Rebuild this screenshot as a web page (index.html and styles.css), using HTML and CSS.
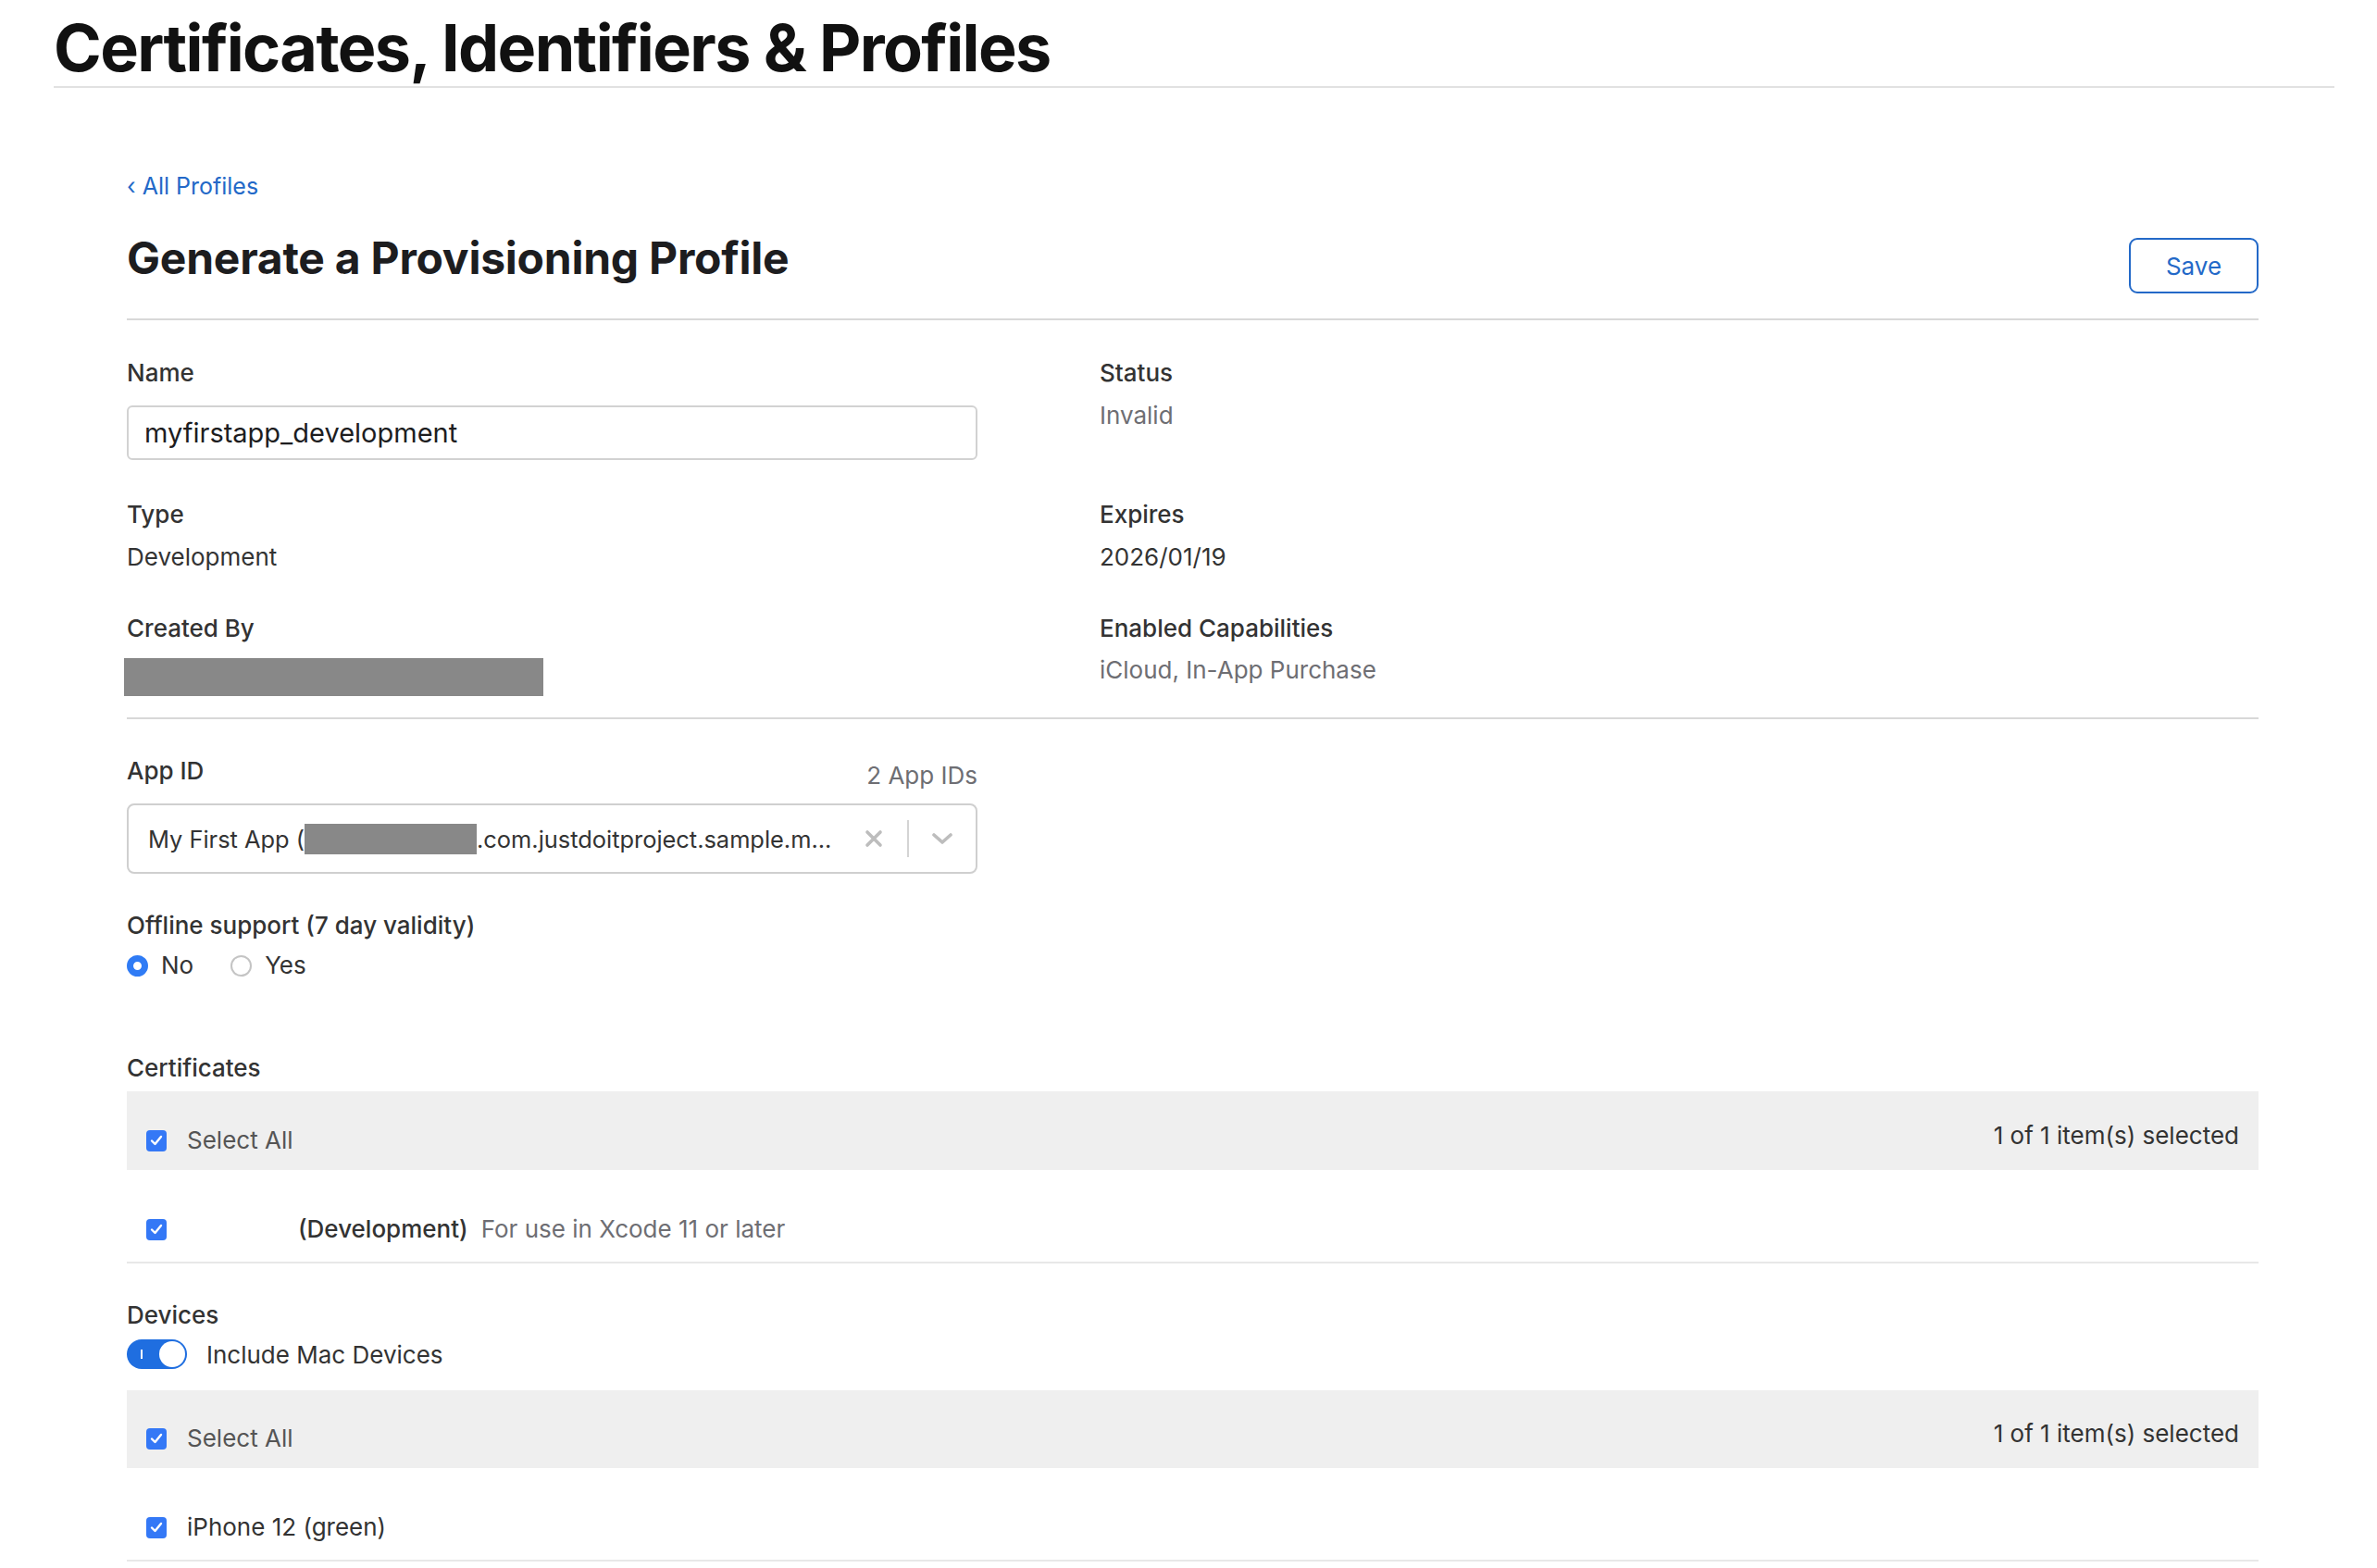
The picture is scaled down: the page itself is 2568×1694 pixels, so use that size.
FILE: index.html
```html
<!DOCTYPE html>
<html lang="en">
  <head>
    <meta charset="UTF-8" />
    <meta name="viewport" content="width=device-width, initial-scale=1.0" />
    <title>Certificates, Identifiers &amp; Profiles</title>
    <link rel="stylesheet" href="styles.css">
  </head>
  <body>
    <header class="page-header">
      <h1>Certificates, Identifiers &amp; Profiles</h1>
    </header>

    <main class="content">
      <a class="back-link" href="#">&lsaquo; All Profiles</a>

      <div class="title-row">
        <h2>Generate a Provisioning Profile</h2>
        <button class="save-btn">Save</button>
      </div>

      <!-- profile summary -->
      <div class="details">
        <div class="field">
          <div class="label">Name</div>
          <input class="text-input" type="text" value="myfirstapp_development">
        </div>
        <div class="field">
          <div class="label">Status</div>
          <div class="value muted">Invalid</div>
        </div>
        <div class="field">
          <div class="label">Type</div>
          <div class="value">Development</div>
        </div>
        <div class="field">
          <div class="label">Expires</div>
          <div class="value">2026/01/19</div>
        </div>
        <div class="field last-row">
          <div class="label">Created By</div>
          <div class="redacted created-by"></div>
        </div>
        <div class="field last-row">
          <div class="label">Enabled Capabilities</div>
          <div class="value muted caps">iCloud, In-App Purchase</div>
        </div>
      </div>

      <div class="app-id">
        <div class="app-id-head">
          <span class="label">App ID</span>
          <span class="app-count">2 App IDs</span>
        </div>
        <div class="select">
          <span class="select-text">My First App (<span class="redacted app-team"></span>.com.justdoitproject.sample.m...</span>
          <span class="select-tools">
            <svg class="clear-icon" width="20" height="20" viewBox="0 0 20 20">
              <path d="M3 3 L17 17 M17 3 L3 17" stroke="#bdbdbd" stroke-width="3.6" stroke-linecap="round" fill="none"/>
            </svg>
            <span class="tool-divider"></span>
            <svg class="chevron-icon" width="24" height="14" viewBox="0 0 24 14">
              <path d="M3 3 L12 11 L21 3" stroke="#bdbdbd" stroke-width="3.6" stroke-linecap="round" stroke-linejoin="round" fill="none"/>
            </svg>
          </span>
        </div>
      </div>

      <div class="section-label offline-label">Offline support (7 day validity)</div>
      <div class="radios">
        <label class="radio-item"><span class="radio checked"></span>No</label>
        <label class="radio-item"><span class="radio"></span>Yes</label>
      </div>

      <div class="section-label certs-label">Certificates</div>
      <div class="list-head">
        <div class="check-item select-all">
          <span class="check"><svg width="14" height="12" viewBox="0 0 14 12"><path d="M2 6.5 L5.5 10 L12 2" stroke="#fff" stroke-width="2.4" stroke-linecap="round" stroke-linejoin="round" fill="none"/></svg></span>
          Select All
        </div>
        <div class="selected-count">1 of 1 item(s) selected</div>
      </div>
      <div class="list-row">
        <span class="check"><svg width="14" height="12" viewBox="0 0 14 12"><path d="M2 6.5 L5.5 10 L12 2" stroke="#fff" stroke-width="2.4" stroke-linecap="round" stroke-linejoin="round" fill="none"/></svg></span>
        <span class="cert-name">(Development)</span>
        <span class="cert-note">For use in Xcode 11 or later</span>
      </div>

      <div class="section-label devices-label">Devices</div>
      <div class="toggle-row">
        <span class="toggle"><span class="toggle-mark"></span><span class="toggle-knob"></span></span>
        Include Mac Devices
      </div>
      <div class="list-head devices-head">
        <div class="check-item select-all">
          <span class="check"><svg width="14" height="12" viewBox="0 0 14 12"><path d="M2 6.5 L5.5 10 L12 2" stroke="#fff" stroke-width="2.4" stroke-linecap="round" stroke-linejoin="round" fill="none"/></svg></span>
          Select All
        </div>
        <div class="selected-count">1 of 1 item(s) selected</div>
      </div>
      <div class="list-row">
        <span class="check"><svg width="14" height="12" viewBox="0 0 14 12"><path d="M2 6.5 L5.5 10 L12 2" stroke="#fff" stroke-width="2.4" stroke-linecap="round" stroke-linejoin="round" fill="none"/></svg></span>
        <span class="device-name">iPhone 12 (green)</span>
      </div>
    </main>
  </body>
</html>
```

FILE: styles.css
```css
body {
  margin: 0;
  font-family: "Inter", "Liberation Sans", sans-serif;
  font-size: 26px;
  color: #333;
  background: #fff;
}

.page-header {
  margin: 0 46px 0 58px;
  border-bottom: 2px solid #e1e1e1;
}

h1 {
  margin: 0;
  padding-top: 11px;
  font-size: 70px;
  line-height: 82px;
  font-weight: 700;
  letter-spacing: -0.023em;
  color: #111;
}

.content {
  margin: 0 128px 0 137px;
}

.back-link {
  display: block;
  margin-top: 91px;
  font-size: 25px;
  line-height: 30px;
  color: #2369c8;
  text-decoration: none;
}

.title-row {
  display: flex;
  justify-content: space-between;
  align-items: flex-start;
  padding: 34px 0 27px;
  border-bottom: 2px solid #d8d8d8;
}

h2 {
  margin: 0;
  font-size: 48px;
  line-height: 58px;
  font-weight: 700;
  letter-spacing: -0.005em;
  color: #1d1d1f;
}

.save-btn {
  margin-top: 7px;
  width: 140px;
  height: 60px;
  border: 2px solid #2369c8;
  border-radius: 9px;
  background: #fff;
  color: #2369c8;
  font-family: inherit;
  font-size: 26px;
}

.details {
  display: grid;
  grid-template-columns: 1051px 1fr;
  row-gap: 44px;
  padding: 42px 0 23px;
  border-bottom: 2px solid #d8d8d8;
}

.last-row {
  margin-top: 3px;
}

.label,
.section-label {
  font-weight: 500;
  line-height: 30px;
  color: #333;
}

.value {
  margin-top: 16px;
  line-height: 30px;
}

.muted {
  color: #6e6e73;
}

.caps {
  margin-top: 15px;
}

.text-input {
  display: block;
  box-sizing: border-box;
  margin-top: 20px;
  width: 919px;
  height: 59px;
  padding: 0 17px;
  border: 2px solid #d2d2d2;
  border-radius: 6px;
  font-family: inherit;
  font-size: 29px;
  color: #1d1d1f;
}

.redacted {
  display: inline-block;
  background: #888;
}

.created-by {
  display: block;
  margin: 17px 0 0 -3px;
  width: 453px;
  height: 41px;
}

.app-id {
  width: 919px;
  margin-top: 41px;
}

.app-id-head {
  display: flex;
  justify-content: space-between;
  align-items: flex-start;
}

.app-count {
  line-height: 40px;
  color: #6e6e73;
}

.select {
  display: flex;
  align-items: center;
  box-sizing: border-box;
  margin-top: 10px;
  height: 76px;
  padding-left: 21px;
  border: 2px solid #cfcfcf;
  border-radius: 8px;
}

.select-text {
  display: flex;
  align-items: center;
  white-space: nowrap;
  font-size: 25.4px;
  color: #333;
}

.app-team {
  width: 186px;
  height: 33px;
}

.select-tools {
  display: flex;
  align-items: center;
  margin-left: auto;
  padding-right: 24px;
}

.clear-icon {
  margin-right: 26px;
}

.tool-divider {
  width: 2px;
  height: 40px;
  background: #d4d4d4;
  margin-right: 24px;
}

.offline-label {
  margin-top: 41px;
}

.radios {
  display: flex;
  gap: 40px;
  margin-top: 13px;
  line-height: 30px;
}

.radio-item {
  display: flex;
  align-items: center;
  gap: 14px;
  color: #333;
}

.radio {
  box-sizing: border-box;
  width: 23px;
  height: 23px;
  border-radius: 50%;
  border: 2px solid #c4c4c4;
  background: #fff;
}

.radio.checked {
  border: 7.5px solid #2f7bf5;
}

.certs-label {
  margin-top: 81px;
}

.list-head {
  display: flex;
  justify-content: space-between;
  align-items: flex-end;
  box-sizing: border-box;
  margin-top: 10px;
  height: 85px;
  padding: 0 21px 17px;
  background: #efefef;
  line-height: 30px;
}

.check-item {
  display: flex;
  align-items: center;
  gap: 22px;
}

.select-all {
  color: #555;
}

.selected-count {
  padding-bottom: 5px;
  color: #333;
}

.check {
  display: inline-flex;
  align-items: center;
  justify-content: center;
  flex-shrink: 0;
  width: 22px;
  height: 23px;
  border-radius: 4px;
  background: #3478f6;
}

.list-row {
  display: flex;
  align-items: center;
  padding: 49px 21px 20px;
  border-bottom: 2px solid #e8e8e8;
  line-height: 30px;
}

.cert-name {
  margin-left: 142px;
  font-weight: 500;
  color: #333;
}

.cert-note {
  margin-left: 14px;
  color: #6e6e73;
}

.device-name {
  margin-left: 22px;
  color: #333;
}

.devices-label {
  margin-top: 41px;
}

.toggle-row {
  display: flex;
  align-items: center;
  gap: 21px;
  margin-top: 11px;
  color: #333;
}

.toggle {
  display: flex;
  align-items: center;
  justify-content: space-between;
  box-sizing: border-box;
  width: 65px;
  height: 32px;
  padding: 0 2px 0 15px;
  border-radius: 16px;
  background: #1f6ee0;
}

.toggle-mark {
  width: 2px;
  height: 10px;
  background: #fff;
}

.toggle-knob {
  width: 28px;
  height: 28px;
  border-radius: 50%;
  background: #fff;
}

.devices-head {
  margin-top: 23px;
  height: 84px;
}
```
